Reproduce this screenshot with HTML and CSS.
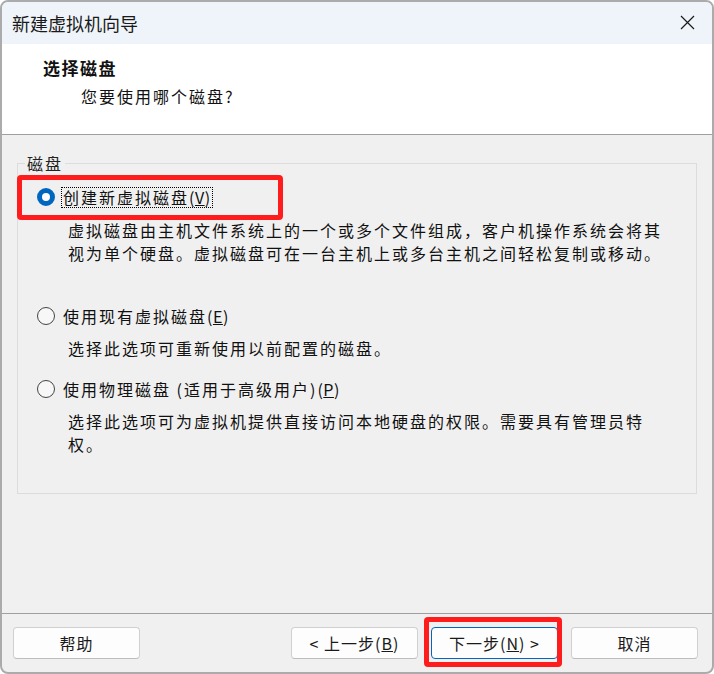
FILE: index.html
```html
<!DOCTYPE html>
<html lang="zh-CN">
<head>
    <meta charset="UTF-8">
    <title>新建虚拟机向导</title>
    <link rel="stylesheet" href="styles.css">
</head>
<body>

    <!-- Dialog window -->
    <div class="window">

        <!-- Title bar -->
        <div class="titlebar">
            <span class="titlebar-text">新建虚拟机向导</span>
            <svg class="close" width="15" height="15" viewBox="0 0 15 15">
                <path d="M1 1 L14 14 M14 1 L1 14" stroke="#1a1a1a" stroke-width="1.2" fill="none"/>
            </svg>
        </div>

        <!-- Page header -->
        <div class="header">
            <div class="header-title">选择磁盘</div>
            <div class="header-sub">您要使用哪个磁盘?</div>
        </div>

        <!-- Main content -->
        <div class="content">
            <fieldset class="group">
                <legend>磁盘</legend>

                <div class="option-row">
                    <span class="radio checked"></span>
                    <span class="label focused">创建新虚拟磁盘<span class="latin">(<u>V</u>)</span></span>
                    <span class="mark mark-option"></span>
                </div>
                <p class="desc desc-first">虚拟磁盘由主机文件系统上的一个或多个文件组成，客户机操作系统会将其视为单个硬盘。虚拟磁盘可在一台主机上或多台主机之间轻松复制或移动。</p>

                <div class="option-row row-second">
                    <span class="radio"></span>
                    <span class="label">使用现有虚拟磁盘<span class="latin">(<u>E</u>)</span></span>
                </div>
                <p class="desc">选择此选项可重新使用以前配置的磁盘。</p>

                <div class="option-row row-third">
                    <span class="radio"></span>
                    <span class="label">使用物理磁盘 (适用于高级用户)<span class="latin">(<u>P</u>)</span></span>
                </div>
                <p class="desc">选择此选项可为虚拟机提供直接访问本地硬盘的权限。需要具有管理员特权。</p>
            </fieldset>
        </div>

        <!-- Button bar -->
        <div class="footer">
            <button class="btn">帮助</button>
            <div class="footer-right">
                <button class="btn">&lt; 上一步(<u>B</u>)</button>
                <button class="btn btn-default">下一步(<u>N</u>) &gt;<span class="mark mark-button"></span></button>
                <button class="btn">取消</button>
            </div>
        </div>

    </div>

</body>
</html>
```

FILE: styles.css
```css
/* General page styling */
body {
    margin: 0;
    background: #fff;
    font-family: "Noto Sans CJK SC", "Microsoft YaHei", sans-serif;
    color: #111;
}

/* Window frame */
.window {
    width: 714px;
    height: 674px;
    box-sizing: border-box;
    border: 2px solid #ababab;
    border-radius: 8px;
    overflow: hidden;
    display: flex;
    flex-direction: column;
    background: #f0f0f0;
}

/* Title bar */
.titlebar {
    height: 42px;
    flex-shrink: 0;
    background: #eef4f9;
    display: flex;
    align-items: center;
    justify-content: space-between;
    padding: 0 17px 0 10px;
}

.titlebar-text {
    font-size: 18px;
    line-height: 22px;
    color: #1a1a1a;
}

.close {
    display: block;
    margin-top: -1px;
}

/* Header area */
.header {
    height: 91px;
    flex-shrink: 0;
    box-sizing: border-box;
    background: #fff;
    border-bottom: 1px solid #a0a0a0;
    padding: 12px 0 0 41px;
}

.header-title {
    font-size: 17px;
    font-weight: bold;
    letter-spacing: 1.5px;
    line-height: 24px;
}

.header-sub {
    margin: 4px 0 0 38px;
    font-size: 16px;
    letter-spacing: 2px;
    line-height: 24px;
}

/* Content area */
.content {
    height: 478px;
    flex-shrink: 0;
    padding-top: 18px;
    box-sizing: border-box;
}

.group {
    margin: 0 15px;
    padding: 13px 0 37px 7px;
    border: 1px solid #dcdcdc;
    min-width: 0;
}

.group legend {
    padding: 0 2px;
    font-size: 16px;
    letter-spacing: 2px;
    line-height: 20px;
    color: #222;
}

/* Radio options */
.option-row {
    position: relative;
    display: flex;
    align-items: center;
    height: 22px;
    padding-left: 12px;
}

.row-second {
    margin-top: 40px;
}

.row-third {
    margin-top: 18px;
}

.radio {
    width: 18px;
    height: 18px;
    box-sizing: border-box;
    border: 1px solid #444;
    border-radius: 50%;
    background: #f7f7f7;
    flex-shrink: 0;
}

.radio.checked {
    border: 5px solid #0067c0;
    background: #fff;
}

.label {
    margin-left: 7px;
    padding: 0 1px;
    font-size: 16px;
    letter-spacing: 2px;
    line-height: 19px;
}

.label .latin {
    letter-spacing: 0.5px;
}

.label.focused {
    outline: 1px dotted #000;
}

.desc {
    margin: 10px 24px 0 43px;
    font-size: 16px;
    letter-spacing: 2px;
    line-height: 23px;
}

.desc-first {
    margin-top: 11px;
}

/* Red annotation boxes */
.mark {
    position: absolute;
    box-sizing: border-box;
    border: 5px solid #ff1c1c;
    border-radius: 4px;
    pointer-events: none;
}

.mark-option {
    left: -8px;
    top: -11px;
    width: 266px;
    height: 45px;
}

.mark-button {
    left: -8px;
    top: -11px;
    width: 138px;
    height: 50px;
}

/* Button bar */
.footer {
    flex: 1;
    border-top: 1px solid #a0a0a0;
    display: flex;
    justify-content: space-between;
    align-items: flex-start;
    padding: 13px 14px 0 11px;
}

.footer-right {
    display: flex;
    gap: 13px;
}

.btn {
    position: relative;
    width: 127px;
    height: 32px;
    box-sizing: border-box;
    border: 1px solid #d0d0d0;
    border-bottom-color: #bdbdbd;
    border-radius: 4px;
    background: #fdfdfd;
    font-family: inherit;
    font-size: 16px;
    letter-spacing: 1px;
    color: #1a1a1a;
    padding: 0;
}

.btn-default {
    border: 1px solid #0067c0;
}
```
